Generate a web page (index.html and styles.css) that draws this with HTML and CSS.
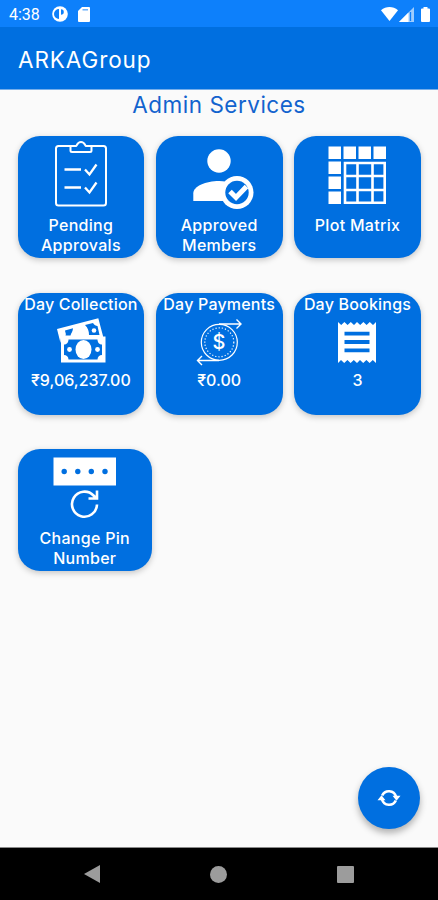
FILE: index.html
```
<!DOCTYPE html>
<html lang="en">
<head>
    <meta charset="UTF-8">
    <title>ARKAGroup</title>
    <link rel="stylesheet" href="styles.css">
</head>
<body>
<div class="status">
    <span class="time">4:38</span>
    <svg class="st-app" width="16" height="16" viewBox="0 0 16 16"><circle cx="8" cy="8" r="7.8" fill="#fff"/><path d="M7 3v10a5 5 0 0 1 0-10zM9 3.2a2.8 2.8 0 0 1 0 5.6z" fill="#0d80fb"/></svg>
    <svg class="st-sd" width="12" height="15" viewBox="0 0 12 15"><path d="M4 0h7a1 1 0 0 1 1 1v13a1 1 0 0 1-1 1H1a1 1 0 0 1-1-1V4z" fill="#fff"/><path d="M4.500 2.800h5.500" stroke="#0d80fb" stroke-width="1.300" opacity=".7"/></svg>
    <span class="space"></span>
    <svg width="17" height="14" viewBox="0 0 17 14"><path d="M0 3.2C5-1 12-1 17 3.2L8.5 14z" fill="#fff"/></svg>
    <svg class="st-cell" width="15" height="15" viewBox="0 0 15 15"><path d="M15 0v15H0z" fill="#fff" opacity=".6"/><path d="M9.5 5.5V15H0z" fill="#fff"/><path d="M11.5 5v9" stroke="#0d80fb" stroke-width="1.3"/></svg>
    <svg class="st-bat" width="9" height="15" viewBox="0 0 9 15"><path d="M2.5 0h4v1.5H8a1 1 0 0 1 1 1V14a1 1 0 0 1-1 1H1a1 1 0 0 1-1-1V2.500a1 1 0 0 1 1-1h1.500z" fill="#fff"/></svg>
</div>
<div class="appbar">ARKAGroup</div>
<div class="main">
    <h1>Admin Services</h1>
    <div class="cards">
        <div class="card">
            <svg class="icon" viewBox="0 0 70 70" fill="none" stroke="#fff" stroke-width="2">
                <path d="M24.500 6H12.500a2.500 2.500 0 0 0-2.500 2.500V63a2.500 2.500 0 0 0 2.500 2.500H57.500A2.500 2.500 0 0 0 60 63V8.500A2.500 2.500 0 0 0 57.500 6H45.500"/>
                <path d="M24.500 6H30c1 0 1-4 5-4s4 4 5 4h5.500v4.500a1.500 1.500 0 0 1-1.500 1.500H26a1.500 1.500 0 0 1-1.500-1.500z"/>
                <path d="M18.500 29.500h16.500M18.500 47.500h16.500M39 29.500l4.500 5L50.500 24.500M39 47.500l4.500 5L50.500 42.500" stroke-width="2.300"/>
            </svg>
            <div class="label">Pending<br>Approvals</div>
        </div>
        <div class="card">
            <svg class="icon" viewBox="0 0 70 70">
                <circle cx="35" cy="21" r="11.700" fill="#fff"/>
                <path d="M9.300 61V53.500C9.300 46 22 41 35 41c5 0 10 1 14 2V61z" fill="#fff"/>
                <circle cx="53" cy="52.500" r="16.500" fill="#fff"/>
                <circle cx="53" cy="52.500" r="11.700" fill="#006fe0"/>
                <path d="M46 51.500l6 6L62.500 46.500" fill="none" stroke="#fff" stroke-width="5"/>
            </svg>
            <div class="label">Approved<br>Members</div>
        </div>
        <div class="card">
            <svg class="icon" viewBox="0 0 70 70">
                <path d="M6.500 6.500h12.500v12.500H6.500zM21.500 6.500H34v12.500H21.500zM36.500 6.500H49v12.500H36.500zM51.500 6.500H64v12.500H51.500zM6.500 21.500h12.500V34H6.500zM6.500 36.500h12.500V49H6.500zM6.500 51.500h12.500V64H6.500z" fill="#fff"/>
                <path d="M23 23h39.700v39.700H23zM35.500 23v40M50.500 23v40M23 36h40M23 50h40" fill="none" stroke="#fff" stroke-width="2.600"/>
            </svg>
            <div class="label">Plot Matrix</div>
        </div>
        <div class="card">
            <div class="label title">Day Collection</div>
            <svg class="icon small" viewBox="0 0 50 50">
                <path d="M1 13L42.300 2.300L47 20V22H5L4.500 27z" fill="#fff"/>
                <path d="M9 14.500l8-2.200c0 3-2 5-2.500 7.200H9.500c1-2-.5-3-.5-5zM29 9l8-2c1 2 3 3 4.500 3l2 9H33c0-4-1-7-4-10z" fill="#006fe0"/>
                <circle cx="38" cy="14.500" r="2.300" fill="#fff"/>
                <path d="M5 20.500h44.500v26H5z" fill="#fff"/>
                <path d="M12.500 23.500h29c0 3 2 5 4.500 5v10.500c-2.500 0-4.500 2-4.500 4.500h-29c0-3-2-4.500-4.500-4.500V28.500c2.500 0 4.500-2 4.500-5z" fill="#006fe0"/>
                <ellipse cx="27.500" cy="33.500" rx="8" ry="9.500" fill="#fff"/>
                <circle cx="13.500" cy="33.500" r="2.400" fill="#fff"/>
                <circle cx="41.500" cy="33.500" r="2.400" fill="#fff"/>
            </svg>
            <div class="label amount">₹9,06,237.00</div>
        </div>
        <div class="card">
            <div class="label title">Day Payments</div>
            <svg class="icon small" viewBox="0 0 50 50" fill="none" stroke="#fff">
                <circle cx="25.300" cy="26.300" r="18" stroke-width="1.200"/>
                <circle cx="25.300" cy="26.300" r="14.500" stroke-width="1.200" stroke-dasharray="1.200 2"/>
                <path d="M25 8H47M42.500 3.500L47 8l-4.500 4.500M25 44.500H3.500M8 40L3.500 44.500L8 49" stroke-width="1.400"/>
                <text class="dollar" x="25" y="33">$</text>
            </svg>
            <div class="label amount">₹0.00</div>
        </div>
        <div class="card">
            <div class="label title">Day Bookings</div>
            <svg class="icon small" viewBox="0 0 50 50">
                <path d="M6 6l3.200 3 3.200-3 3.200 3 3.200-3 3.200 3L25 6l3.200 3 3.200-3 3.200 3 3.200-3 3.200 3L44 6v41l-3.200-3-3.200 3-3.200-3-3.200 3-3.200-3L25 47l-3.200-3-3.200 3-3.200-3-3.200 3-3.200-3L6 47z" fill="#fff"/>
                <path d="M12.500 17.700h25M12.500 26h25M12.500 34.300h25" stroke="#006fe0" stroke-width="3.800"/>
            </svg>
            <div class="label amount">3</div>
        </div>
        <div class="card wide">
            <svg class="icon" viewBox="0 0 70 70">
                <path d="M3.500 4.500h62.500v28H3.500z" fill="#fff"/>
                <g fill="#006fe0"><circle cx="14.200" cy="18.500" r="2.700"/><circle cx="27.800" cy="18.500" r="2.700"/><circle cx="41.300" cy="18.500" r="2.700"/><circle cx="55" cy="18.500" r="2.700"/></g>
                <path d="M47 51.500A12.500 12.500 0 1 1 43.500 42.500L46 45M47 37.500V45.500H38.500" fill="none" stroke="#fff" stroke-width="2.600"/>
            </svg>
            <div class="label">Change Pin<br>Number</div>
        </div>
    </div>
    <div class="fab">
        <svg width="24" height="22" viewBox="0 0 24 22"><path d="M5.200 8.500A7.400 7.400 0 0 1 19 9.500M18.800 13.500A7.400 7.400 0 0 1 5 12.500" fill="none" stroke="#fff" stroke-width="2.600"/><path d="M15.500 8.800h8l-4 5zM.5 13.200h8l-4-5z" fill="#fff"/></svg>
    </div>
</div>
<div class="nav">
    <svg width="16" height="18" viewBox="0 0 16 18"><path d="M0 9L16 0v18z" fill="#9c9c9c"/></svg>
    <span class="home"></span>
    <span class="recent"></span>
</div>
</body>
</html>
```
FILE: styles.css
```
body{
    margin: 0;
    height: 900px;
    display: flex;
    flex-direction: column;
    overflow: hidden;
    background-color: #fafafa;
    font-family: Inter, "Noto Sans", sans-serif;
    color: #ffffff;
}
.status{
    height: 27px;
    display: flex;
    align-items: center;
    padding: 1px 8px 0 9px;
    box-sizing: border-box;
    background-color: #0d80fb;
}
.time{
    font-family: Roboto, sans-serif;
    font-size: 16px;
    font-weight: 400;
    width: 43px;
}
.st-sd{
    margin-left: 10px;
}
.space{
    flex: 1;
}
.st-cell{
    margin-left: 1px;
}
.st-bat{
    margin-left: 7px;
}
.appbar{
    height: 63px;
    line-height: 65px;
    padding-left: 18px;
    background-color: #006fe0;
    border-bottom: 1px solid #77aeea;
    box-sizing: border-box;
    font-size: 22.5px;
    letter-spacing: 0.9px;
}
.main{
    position: relative;
    flex: 1;
    border-bottom: 1px solid #8a8a8a;
}
h1{
    margin: 0;
    height: 46px;
    line-height: 30px;
    text-align: center;
    font-size: 22.5px;
    font-weight: 400;
    letter-spacing: 0.5px;
    color: #1263ce;
}
.cards{
    display: flex;
    flex-wrap: wrap;
    gap: 34.5px 11.5px;
    padding: 0.4px 0 0 17.5px;
}
.card{
    width: 126.8px;
    height: 122px;
    border-radius: 22px;
    display: flex;
    flex-direction: column;
    align-items: center;
    background-color: #006fe0;
    box-shadow: 0 2px 6px rgba(0,0,0,0.22);
}
.wide{
    width: 134.5px;
}
.icon{
    width: 70px;
    height: 70px;
    margin: 4px 0 5px;
}
.small{
    width: 50px;
    height: 50px;
    margin: 2px 0 4.5px;
}
.label{
    font-size: 16px;
    font-weight: 500;
    line-height: 20px;
    text-align: center;
    white-space: nowrap;
    letter-spacing: 0.3px;
}
.title{
    padding-top: 1px;
    letter-spacing: 0.2px;
}
.amount{
    letter-spacing: 0;
}
.dollar{
    font-size: 20px;
    font-weight: 500;
    text-anchor: middle;
    fill: #ffffff;
    stroke: none;
}
.fab{
    position: absolute;
    right: 18px;
    bottom: 18px;
    width: 62px;
    height: 62px;
    border-radius: 50%;
    display: flex;
    align-items: center;
    justify-content: center;
    background-color: #006fe0;
    box-shadow: 0 4px 7px rgba(0,0,0,0.3);
}
.nav{
    height: 52px;
    display: flex;
    align-items: center;
    justify-content: space-between;
    padding: 0 84px;
    background-color: #000000;
}
.home{
    width: 17px;
    height: 17px;
    border-radius: 50%;
    background-color: #9c9c9c;
}
.recent{
    width: 17px;
    height: 17px;
    border-radius: 1px;
    background-color: #9c9c9c;
}
```
